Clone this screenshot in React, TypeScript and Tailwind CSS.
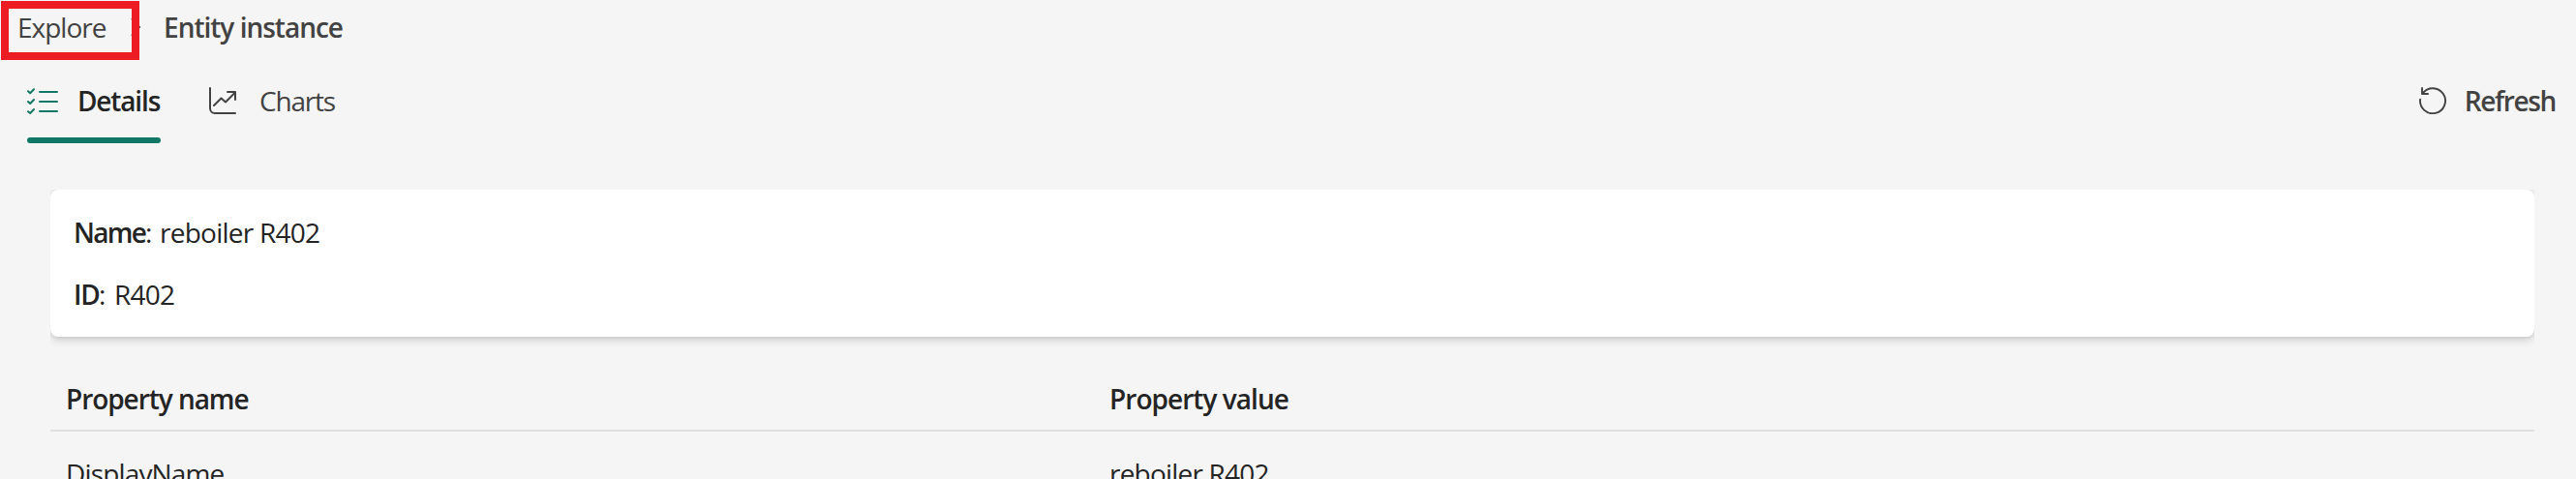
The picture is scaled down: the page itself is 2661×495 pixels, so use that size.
import React from "react";

function ChecklistIcon() {
  return (
    <svg width="32" height="28" viewBox="0 0 32 28" fill="none" stroke="#117865" strokeWidth="2" strokeLinecap="round" strokeLinejoin="round">
      <path d="M1 4.2 3.2 6.2 7 2.2M1 15 3.2 17 7 13M1 25.2 3.2 27 7 23" />
      <path d="M13 5h18M13 15h18M13 25h18" />
    </svg>
  );
}

function ChartIcon() {
  return (
    <svg width="28" height="28" viewBox="0 0 28 28" fill="none" stroke="#424242" strokeWidth="2" strokeLinecap="round" strokeLinejoin="round">
      <path d="M1 1v21a5 5 0 0 0 5 5h21" />
      <path d="M5 19l7.5-7.5 4.5 4L27 5.5M19 5h8v8" />
    </svg>
  );
}

function RefreshIcon() {
  return (
    <svg width="28" height="28" viewBox="0 0 28 28" fill="none" stroke="#424242" strokeWidth="1.9" strokeLinecap="round" strokeLinejoin="round">
      <path d="M1.1 12.6A13 13 0 1 0 3.6 6.4" />
      <path d="M3 1v6h6" />
    </svg>
  );
}

export default function App() {
  return (
    <div className="relative h-[495px] w-full overflow-hidden bg-[#f5f5f5] font-['Open_Sans','Noto_Sans',sans-serif] text-[28px] leading-[40px] whitespace-nowrap text-[#242424]">
      <nav className="flex h-[84px] items-start pt-2 pl-[18px] text-[#424242]">
        <span className="w-[116px] tracking-[-1px]">Explore</span>
        <svg className="mt-[10px] mr-[23px]" width="12" height="20" viewBox="0 0 12 20" fill="none" stroke="#424242" strokeWidth="2">
          <path d="M2 1l8 9-8 9" />
        </svg>
        <span className="font-semibold tracking-[-1px]">Entity instance</span>
      </nav>
      <div className="absolute top-px left-px h-[61px] w-[143px] border-8 border-[#ed1c24]" />
      <div className="flex h-[64px] items-start justify-between pr-[21px] pl-7">
        <div className="flex">
          <div className="flex h-[64px] w-[138px] flex-col justify-between">
            <div className="flex">
              <div className="w-[52px] pt-[6px]"><ChecklistIcon /></div>
              <span className="font-semibold tracking-[-1.15px]">Details</span>
            </div>
            <div className="h-[6px] rounded-full bg-[#117865]" />
          </div>
          <div className="ml-[50px] flex text-[#424242]">
            <div className="w-[52px] pt-[6px]"><ChartIcon /></div>
            <span className="tracking-[-1.2px]">Charts</span>
          </div>
        </div>
        <div className="flex text-[#424242]">
          <div className="w-[47px] pt-[6px]"><RefreshIcon /></div>
          <span className="font-semibold tracking-[-1.35px]">Refresh</span>
        </div>
      </div>
      <main className="mt-12 mr-[43px] ml-[52px]">
        <div className="h-[172px] overflow-hidden">
          <section className="flex h-[152px] flex-col gap-6 rounded-lg bg-white pt-6 pl-6 shadow-[0_0_4px_rgba(0,0,0,0.12),0_4px_8px_rgba(0,0,0,0.14)]">
            <div className="flex">
              <strong className="w-[74px] font-semibold tracking-[-1.7px]">Name</strong>
              <span className="w-[15px]">:</span>
              <span className="tracking-[-0.75px]">reboiler R402</span>
            </div>
            <div className="flex">
              <strong className="w-[26px] font-semibold tracking-[-1.2px]">ID</strong>
              <span className="w-4">:</span>
              <span className="tracking-[-0.8px]">R402</span>
            </div>
          </section>
        </div>
        <div className="grid h-[78px] grid-cols-[1078px_1fr] border-b-2 border-[#e0e0e0] pt-6 pl-4 font-semibold">
          <span className="tracking-[-1.05px]">Property name</span>
          <span className="tracking-[-0.95px]">Property value</span>
        </div>
        <div className="grid grid-cols-[1078px_1fr] pt-[23px] pl-4">
          <span className="tracking-[-0.85px]">DisplayName</span>
          <span className="tracking-[-0.8px]">reboiler R402</span>
        </div>
      </main>
    </div>
  );
}
